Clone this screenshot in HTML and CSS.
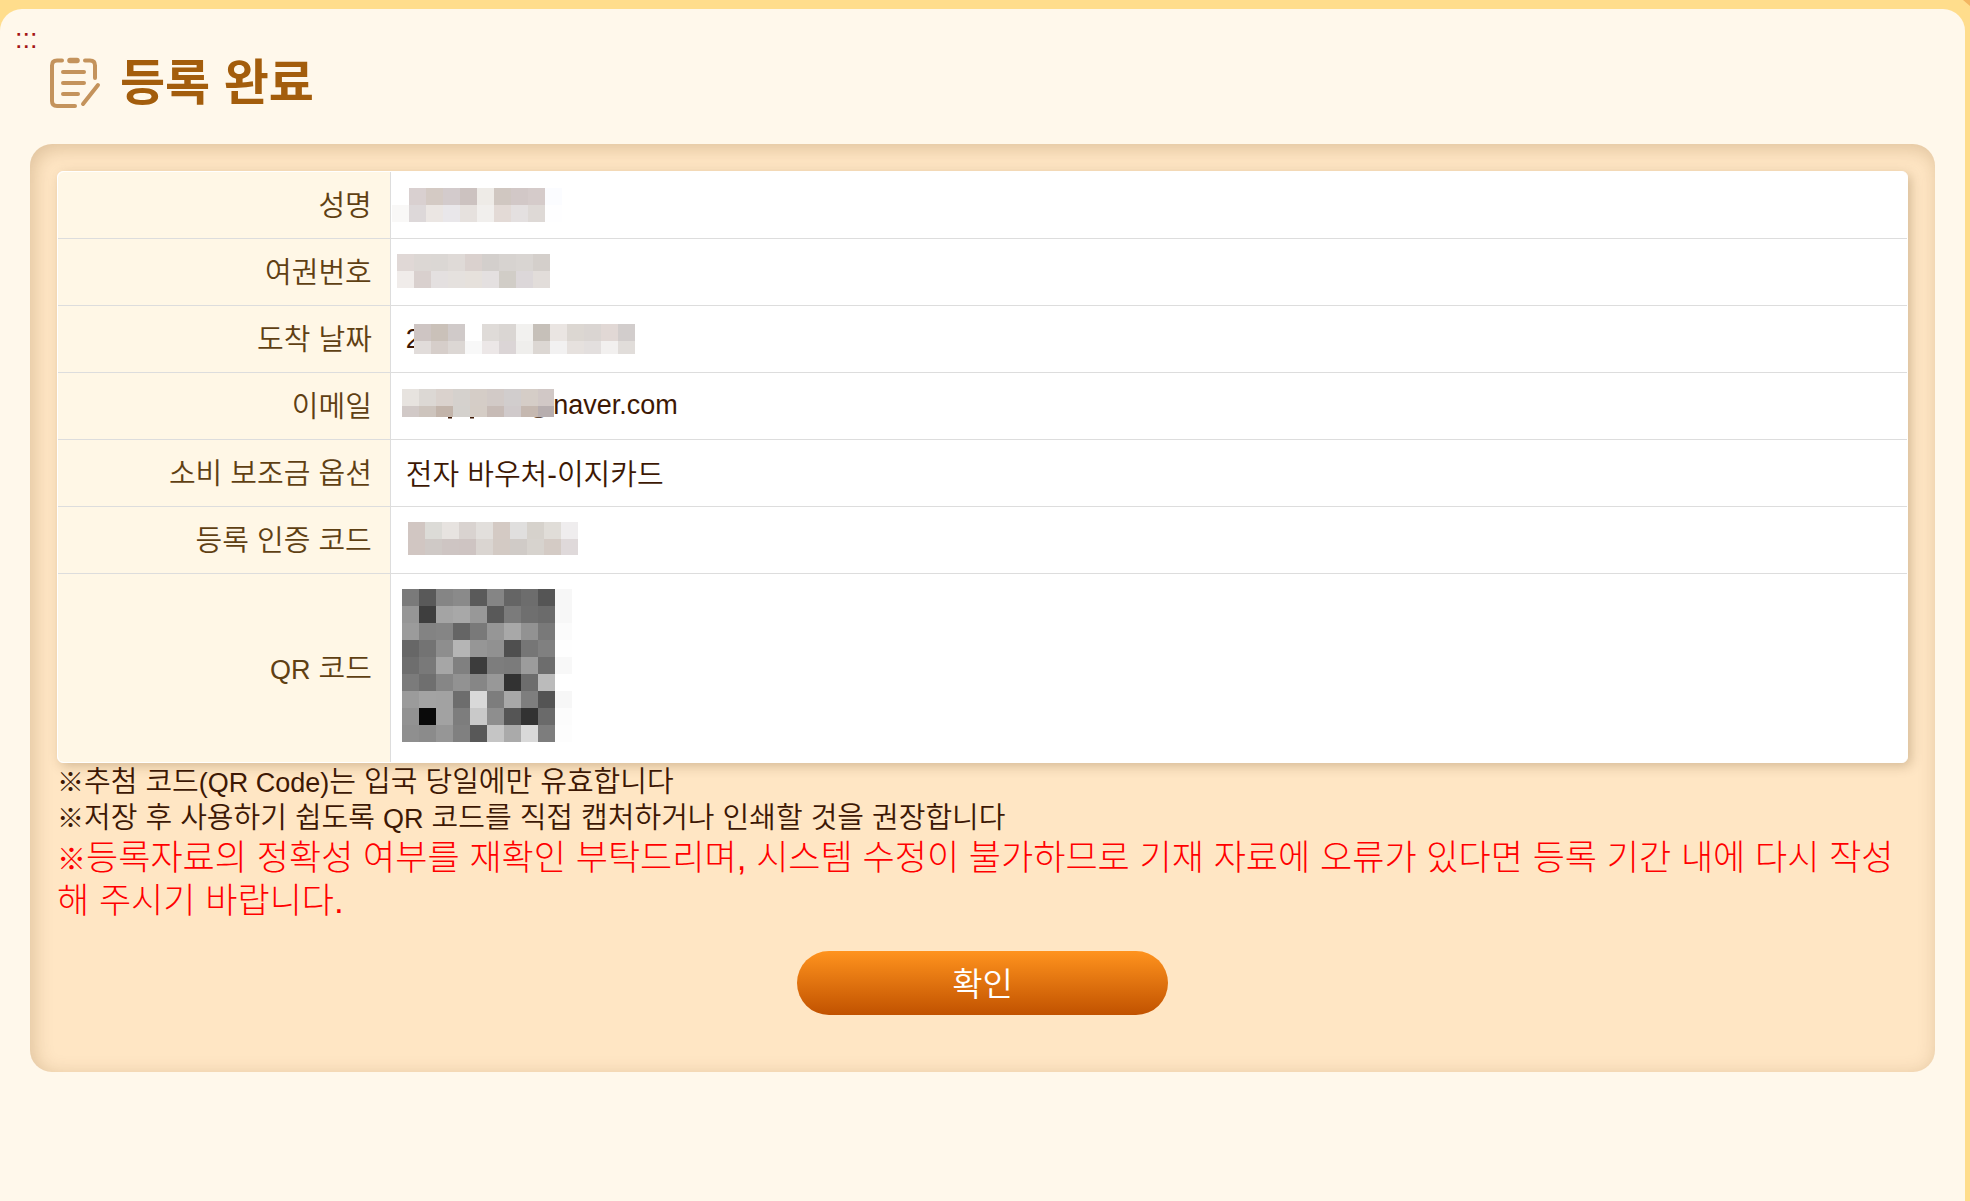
FILE: index.html
```html
<!DOCTYPE html>
<html lang="ko">
<head>
<meta charset="utf-8">
<meta name="viewport" content="width=device-width, initial-scale=1">
<title>등록 완료</title>
<link rel="stylesheet" href="styles.css">
</head>
<body>
<svg class="corner" viewBox="0 0 7 6" aria-hidden="true"><path d="M0 0H7V6Z" fill="#f3b661"/></svg>
<main class="page">
  <a class="anchor" href="#content">:::</a>
  <header class="heading">
    <svg class="heading-icon" viewBox="0 0 50 50" fill="none" stroke="#c4935c" stroke-width="4" stroke-linecap="round" stroke-linejoin="round" aria-hidden="true">
      <path d="M12 2.500H7Q2 2.500 2 7.500V43Q2 48 7 48H25M35 2.500H40Q45 2.500 45 7.500V20M13 14H34M13 25H34M13 36H28M48 27L33 46"/>
      <path d="M20 2.500H27" stroke-width="5.500"/>
    </svg>
    <h1>등록 완료</h1>
  </header>
  <section class="card" id="content">
    <table class="details">
      <tbody>
        <tr><th scope="row">성명</th><td><div class="value"><svg class="mosaic name" data-colors="fff d9d0d0 d4cac4 d3cbcc ccc2c0 eeebe7 d0c7c1 d2c8c7 d5cbca fbfcff|f9f8f7 ddd8d9 ebe6e3 e9e7ea e6e1de f1efed e3dad6 e4e0e0 ded9d6 fefeff"></svg></div></td></tr>
        <tr><th scope="row">여권번호</th><td><div class="value"><svg class="mosaic passport" data-colors="e0d8d6 dcd7d4 dbd7d4 dfdad7 dad1ce d3cfcc d7d3d0 d9d5d2 d4cfcb|f0ecea d9d0ce e4e0e0 e5e1de e6e1dc e4e0e0 d1cdc7 dcd7d9 e2ddda"></svg></div></td></tr>
        <tr><th scope="row">도착 날짜</th><td><div class="value"><span class="latin date">2</span><svg class="mosaic covered-date" data-colors="cec5c3 cac1b9 d0cac9 fff dfdbd8 dad6d3 f2f1ef c6c0b9 eae5e2 dcd7d2 dad5d2 e1d8d5 d2cdcc|e1dcda d6ceca dcd7d4 f8f8f8 ece7e7 dbd5d6 efeeec dcd7d3 f2f1f1 e6e1de e3dfde f2f0ef e1ddda"></svg></div></td></tr>
        <tr><th scope="row">이메일</th><td><div class="value"><svg class="mosaic mail" data-colors="e7e3df dcd8d4 dad2cd d5d1cd d5cdc7 d2cac7 d1cdcd d5cdc7 d1c8c6|d1c9c7 cdc4bd c2b4aa d4d1cd d5cdc6 c7bbb6 d0cacb c5b8b0 b7aeaf"><path d="M46 28.500H50M68 28.500H72" stroke="#3d1804" stroke-width="2"/></svg><span class="latin domain">@naver.com</span></div></td></tr>
        <tr><th scope="row">소비 보조금 옵션</th><td><div class="value option">전자 바우처-이지카드</div></td></tr>
        <tr><th scope="row">등록 인증 코드</th><td><div class="value"><svg class="mosaic code" data-colors="d1c6c2 dcdbd7 e7e3e0 d9d3d0 e2dfdc d4cac4 e0dfde d6d2cc e0ddd8 efedee|d1c6c2 cfc9c6 cec5c3 cec4c2 dad5d1 d3cac4 d0cbc7 d7d3ce d4cbc5 dfd9da"></svg></div></td></tr>
        <tr class="qr-row"><th scope="row"><span class="latin">QR</span> 코드</th><td><div class="value"><svg class="mosaic qr" role="img" aria-label="QR 코드" data-colors="7a7a7a 595959 858585 8a8a8a 5a5a5a 858585 656565 6d6d6d 555 f7f7f7|969696 3e3e3e a4a4a4 a8a8a8 989898 595959 7b7b7b 6f6f6f 6b6b6b f7f7f7|9b9b9b 838383 858585 656565 797979 969696 a8a8a8 929292 797979 fbfbfb|676767 737373 8e8e8e b5b5b5 969696 919191 4f4f4f 767676 808080 fefefe|6e6e6e 797979 a6a6a6 808080 3c3c3c 7d7d7d 7b7b7b 9c9c9c 6d6d6d f8f8f8|7b7b7b 6f6f6f 868686 929292 868686 989898 323232 6d6d6d bbb fff|9b9b9b a3a3a3 a2a2a2 6d6d6d d9d9d9 7d7d7d a8a8a8 7e7e7e 545454 f7f7f7|929292 0a0a0a a2a2a2 7d7d7d c9c9c9 8e8e8e 555 323232 6a6a6a fcfcfc|8f8f8f 8b8b8b 969696 808080 585858 c5c5c5 aaa d9d9d9 7d7d7d fdfdfd"></svg></div></td></tr>
      </tbody>
    </table>
    <div class="notes">
      <p><span class="mark">※</span>추첨 코드<span class="latin">(QR Code)</span>는 입국 당일에만 유효합니다</p>
      <p><span class="mark">※</span>저장 후 사용하기 쉽도록 <span class="latin">QR</span> 코드를 직접 캡처하거나 인쇄할 것을 권장합니다</p>
      <p class="warning"><span class="mark">※</span>등록자료의 정확성 여부를 재확인 부탁드리며, 시스템 수정이 불가하므로 기재 자료에 오류가 있다면 등록 기간 내에 다시 작성해 주시기 바랍니다.</p>
    </div>
    <button class="confirm" type="button">확인</button>
  </section>
</main>
<script src="mosaic.js"></script>
</body>
</html>
```
FILE: styles.css
```css
* { box-sizing: border-box; }

body {
  margin: 0;
  min-height: 100vh;
  padding: 9px 5px 0 0;
  display: flex;
  background: #ffdd8c;
  color: #3d1804;
  font: 350 29px/36px "Liberation Sans", "Noto Sans CJK KR", sans-serif;
}

.corner { position: absolute; top: 0; right: 0; width: 7px; height: 6px; }

.page {
  flex: 1;
  padding: 15px 30px 40px;
  border-radius: 22px 22px 0 0;
  background: #fff8eb;
}

.anchor {
  display: block;
  width: max-content;
  margin-left: -15px;
  color: #a31515;
  font-size: 27px;
  line-height: 30px;
  text-decoration: none;
}

.heading {
  display: flex;
  align-items: center;
  gap: 20px;
  padding: 0 20px;
}

.heading-icon { width: 50px; height: 50px; overflow: visible; }

h1 {
  margin: 0;
  color: #a35d0c;
  font-size: 49px;
  font-weight: 700;
  line-height: 58px;
}

.card {
  margin-top: 32px;
  padding: 27px 27px 57px;
  border-radius: 22px;
  background: #ffe6c4;
  box-shadow: inset 3px 4px 20px rgba(100, 60, 10, 0.22);
}

.details {
  width: 100%;
  table-layout: fixed;
  border: 1px solid #fff;
  border-spacing: 0;
  border-radius: 6px;
  background: #fff;
  box-shadow: 3px 3px 12px rgba(80, 50, 10, 0.25);
}

.details th, .details td {
  height: 67px;
  padding: 0;
  border-bottom: 1px solid #ddd;
}

.details th {
  width: 18%;
  padding: 2px 18px 0 0;
  border-right: 1px solid #ddd;
  background: #fff7e6;
  color: #5f4013;
  font-weight: inherit;
  text-align: right;
}

.details tr:first-child th { border-top-left-radius: 6px; }
.details tr:last-child th { border-bottom-left-radius: 6px; }
.details .qr-row th, .details .qr-row td { height: 188px; border-bottom: 0; }

.value { display: flex; align-items: center; }
.option { padding: 3px 0 0 15px; }
.latin { font-size: 27px; line-height: 1; }
.date { padding-left: 15px; }
.domain { margin: 0 0 2px -28px; }

.mosaic {
  display: block;
  flex: none;
  height: 34px;
  position: relative;
  overflow: visible;
}

.name { width: 170px; margin-left: 1px; }
.passport { width: 153px; margin: 0 0 2px 6px; }
.covered-date { width: 221px; height: 30px; margin-left: -7px; }
.mail { width: 152px; height: 28px; margin: 0 0 6px 11px; overflow: visible; }
.code { width: 170px; height: 33px; margin: 0 0 4px 17px; }
.qr { width: 170px; height: 153px; margin: 0 0 6px 11px; }

.notes { padding-top: 1px; }
.notes p { margin: 0; }
.mark { font-size: 27px; line-height: 1; }
.notes .warning {
  color: #f00;
  font-size: 35px;
  font-weight: 300;
  line-height: 43px;
  word-break: break-all;
}
.warning .mark { font-size: 29px; }

.confirm {
  display: block;
  width: 20%;
  height: 64px;
  margin: 29px auto 0;
  padding: 4px 0 0;
  border: 0;
  border-radius: 32px;
  background: linear-gradient(#ff931e, #c15200);
  color: #fff;
  font: inherit;
  font-size: 33px;
  cursor: pointer;
}
```
FILE: mosaic.js
```js
// Fills each mosaic with 17px squares; rows are split by "|", cells by spaces.
// The last row is shortened where the mosaic is not a whole number of cells tall.
const CELL = 17;
document.querySelectorAll('.mosaic').forEach((svg) => {
  const { width, height } = svg.getBoundingClientRect();
  svg.dataset.colors.split('|').forEach((row, y) => {
    row.split(' ').forEach((color, x) => {
      const rect = document.createElementNS('http://www.w3.org/2000/svg', 'rect');
      rect.setAttribute('x', x * CELL);
      rect.setAttribute('y', y * CELL);
      rect.setAttribute('width', Math.min(CELL, width - x * CELL));
      rect.setAttribute('height', Math.min(CELL, height - y * CELL));
      rect.setAttribute('fill', '#' + color);
      svg.append(rect);
    });
  });
});
```
